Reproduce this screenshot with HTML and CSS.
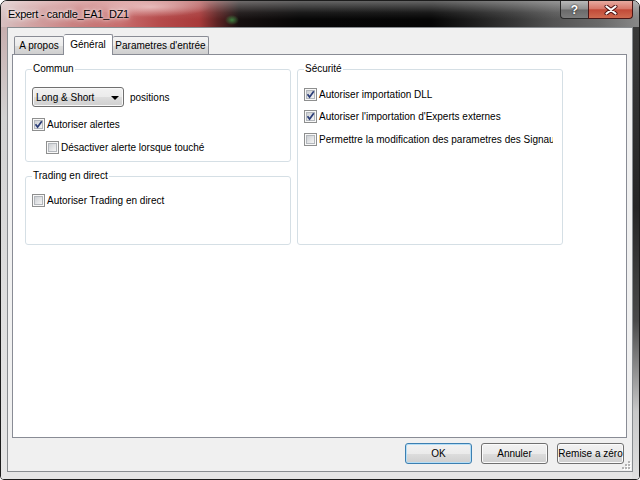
FILE: index.html
```html
<!DOCTYPE html>
<html lang="fr">
<head>
<meta charset="utf-8">
<title>Expert - candle_EA1_DZ1</title>
<link rel="stylesheet" href="styles.css">
</head>
<body>
<div class="window">
  <div class="titlebar">
    <span class="title">Expert - candle_EA1_DZ1</span>
    <div class="caption">
      <span class="cbtn help">?</span>
      <span class="cbtn close">
        <svg width="14" height="10" viewBox="0 0 14 10"><path d="M2.5 1.5 L11.5 8.5 M11.5 1.5 L2.5 8.5" stroke="#4a1010" stroke-width="4" stroke-linecap="round"/><path d="M2.5 1.5 L11.5 8.5 M11.5 1.5 L2.5 8.5" stroke="#fff" stroke-width="2.2" stroke-linecap="round"/></svg>
      </span>
    </div>
  </div>
  <div class="frame">
    <div class="client">
      <div class="tabs">
        <div class="tab w1">A propos</div>
        <div class="tab active w2">Général</div>
        <div class="tab w3">Parametres d'entrée</div>
      </div>
      <div class="panel">
        <div class="col">
          <fieldset class="group commun">
            <legend>Commun</legend>
            <div class="select-row">
              <div class="select"><span>Long &amp; Short</span><span class="arrow"></span></div>
              <span class="after">positions</span>
            </div>
            <div class="check m11"><span class="box"><svg class="tick" width="13" height="13" viewBox="0 0 13 13"><path d="M3.5 6.2 L5.6 9 L9.8 3.2" fill="none" stroke="#2b3d78" stroke-width="1.7"/></svg></span><span class="lbl">Autoriser alertes</span></div>
            <div class="check m10 indent"><span class="box"></span><span class="lbl">Désactiver alerte lorsque touché</span></div>
          </fieldset>
          <fieldset class="group trading">
            <legend>Trading en direct</legend>
            <div class="check m12"><span class="box"></span><span class="lbl">Autoriser Trading en direct</span></div>
          </fieldset>
        </div>
        <fieldset class="group securite">
          <legend>Sécurité</legend>
          <div class="check m13"><span class="box"><svg class="tick" width="13" height="13" viewBox="0 0 13 13"><path d="M3.5 6.2 L5.6 9 L9.8 3.2" fill="none" stroke="#2b3d78" stroke-width="1.7"/></svg></span><span class="lbl">Autoriser importation DLL</span></div>
          <div class="check m9"><span class="box"><svg class="tick" width="13" height="13" viewBox="0 0 13 13"><path d="M3.5 6.2 L5.6 9 L9.8 3.2" fill="none" stroke="#2b3d78" stroke-width="1.7"/></svg></span><span class="lbl">Autoriser l'importation d'Experts externes</span></div>
          <div class="check m10"><span class="box"></span><span class="lbl">Permettre la modification des parametres des Signaux</span></div>
        </fieldset>
      </div>
      <div class="buttons">
        <span class="btn default">OK</span>
        <span class="btn">Annuler</span>
        <span class="btn">Remise a zéro</span>
      </div>
      <svg class="grip" width="9" height="9" viewBox="0 0 9 9"><g fill="#fff"><rect x="7" y="1" width="2" height="2"/><rect x="4" y="4" width="2" height="2"/><rect x="7" y="4" width="2" height="2"/><rect x="1" y="7" width="2" height="2"/><rect x="4" y="7" width="2" height="2"/><rect x="7" y="7" width="2" height="2"/></g><g fill="#b4b4b4"><rect x="6" y="0" width="2" height="2"/><rect x="3" y="3" width="2" height="2"/><rect x="6" y="3" width="2" height="2"/><rect x="0" y="6" width="2" height="2"/><rect x="3" y="6" width="2" height="2"/><rect x="6" y="6" width="2" height="2"/></g></svg>
    </div>
  </div>
</div>
</body>
</html>
```

FILE: styles.css
```css
html, body {
  margin: 0;
  padding: 0;
  width: 640px;
  height: 480px;
  overflow: hidden;
  background: #ffffff;
}

body {
  font-family: "Liberation Sans", Arial, sans-serif;
  font-size: 10px;
  color: #000;
}

.window {
  box-sizing: border-box;
  width: 640px;
  height: 480px;
  border: 1px solid #1c1c1c;
  border-radius: 7px 7px 4px 4px;
  overflow: hidden;
  display: flex;
  flex-direction: column;
  background: #e3e3e3;
}

.titlebar {
  flex: none;
  height: 26px;
  display: flex;
  align-items: flex-start;
  padding: 0 6px 0 7px;
  background:
    linear-gradient(to bottom, rgba(255,255,255,0.38), rgba(255,255,255,0.08) 45%, rgba(255,255,255,0) 70%),
    radial-gradient(ellipse 7px 5px at 231px 19px, #3f7f3f, rgba(63,127,63,0)),
    radial-gradient(ellipse 60px 10px at 150px 6px, rgba(255,235,235,0.55), rgba(255,235,235,0)),
    linear-gradient(to right, #d7c0c0 0, #d2a3a3 30px, #c87a7a 80px, #c86c6c 120px, #b54a4a 160px, #a83a3a 198px, #5e2424 216px, #161010 238px, #070707 300px, #060606 430px, #1f1f1f 475px, #383838 515px, #535353 552px, #6a6a6a 600px, #8a8a8a 640px);
}

.title {
  flex: 1;
  line-height: 26px;
  font-size: 11px;
  letter-spacing: -0.3px;
  color: #000;
  text-shadow: 0 0 3px #fff, 0 0 6px rgba(255,255,255,0.9), 0 0 10px rgba(255,255,255,0.7);
}

.caption {
  display: flex;
  align-items: flex-start;
}

.cbtn {
  box-sizing: border-box;
  height: 18px;
  display: flex;
  align-items: center;
  justify-content: center;
  border: 1px solid #2a2a2a;
  border-top: none;
}

.help {
  width: 28px;
  border-right: none;
  border-radius: 0 0 0 4px;
  background: linear-gradient(to bottom, #b9b9b9, #8e8e8e 48%, #6a6a6a 52%, #7c7c7c);
  color: #fff;
  font-weight: bold;
  font-size: 12px;
  text-shadow: 0 0 2px #000;
}

.close {
  width: 45px;
  border-radius: 0 0 4px 0;
  border-color: #4b1616;
  background: linear-gradient(to bottom, #e7aaa0, #d7796b 45%, #c24a38 52%, #cf6a50);
}

.frame {
  flex: 1;
  display: flex;
  padding: 0 6px 7px 6px;
  background:
    linear-gradient(to bottom, #3a3a3a, #262626 40%, #4a4a4a 65%, #c8c8c8 85%, #e0e0e0) right top / 7px 100% no-repeat,
    linear-gradient(to bottom, #c7aeae, #d2d2d2 20%, #dedede 60%, #e6e6e6) left top / 7px 100% no-repeat,
    #e5e5e5;
}

.client {
  flex: 1;
  position: relative;
  display: flex;
  flex-direction: column;
  background: #f0f0f0;
  border: 1px solid #888c90;
  padding: 6px 5px 7px 4px;
}

.tabs {
  display: flex;
  align-items: flex-end;
  height: 20px;
  padding-left: 2px;
}

.tab {
  box-sizing: border-box;
  height: 18px;
  display: flex;
  align-items: center;
  justify-content: center;
  white-space: nowrap;
  border: 1px solid #898c95;
  border-bottom: none;
  border-radius: 2px 2px 0 0;
  background: linear-gradient(to bottom, #f3f3f3, #ebebeb 50%, #dddddd 51%, #cfcfcf);
}

.tab + .tab {
  border-left: none;
}

.tab.active {
  height: 21px;
  margin-bottom: -1px;
  position: relative;
  z-index: 1;
  background: #ffffff;
  padding-bottom: 1px;
}

.w1 { width: 50px; }
.w2 { width: 49px; }
.w3 { width: 96px; }

.panel {
  flex: 1;
  background: #ffffff;
  border: 1px solid #898c95;
  padding: 8px 12px;
  display: grid;
  grid-template-columns: 266px 266px;
  column-gap: 6px;
  align-items: start;
  align-content: start;
}

.col {
  display: flex;
  flex-direction: column;
}

.group {
  margin: 0;
  min-width: 0;
  border: 1px solid #d5dfe5;
  border-radius: 3px;
  padding: 0 9px 7px 6px;
}

.group legend {
  padding: 0 1px;
  line-height: 12px;
  font-size: 10px;
}

.trading {
  margin-top: 8px;
  padding-bottom: 37px;
}

.securite {
  padding-bottom: 98px;
}

.select-row {
  display: flex;
  align-items: center;
  margin-top: 12px;
}

.select {
  box-sizing: border-box;
  width: 92px;
  height: 20px;
  display: flex;
  align-items: center;
  justify-content: space-between;
  padding: 0 4px 0 3px;
  border: 1px solid #707070;
  border-radius: 3px;
  background: linear-gradient(to bottom, #f2f2f2, #ebebeb 50%, #dddddd 51%, #cfcfcf);
  box-shadow: inset 0 0 0 1px #f8f8f8;
}

.arrow {
  width: 0;
  height: 0;
  border-left: 4px solid transparent;
  border-right: 4px solid transparent;
  border-top: 4px solid #000;
  margin-top: 1px;
}

.after {
  margin-left: 6px;
}

.check {
  display: flex;
  align-items: center;
  height: 13px;
  white-space: nowrap;
  overflow: hidden;
}

.m9 { margin-top: 9px; }
.m10 { margin-top: 10px; }
.m11 { margin-top: 11px; }
.m12 { margin-top: 12px; }
.m13 { margin-top: 13px; }

.indent {
  padding-left: 14px;
}

.box {
  flex: none;
  position: relative;
  box-sizing: border-box;
  width: 13px;
  height: 13px;
  margin-right: 2px;
  border: 1px solid #8e8f8f;
  background:
    linear-gradient(135deg, #cdd0d4, #f4f4f4) 2px 2px / 7px 7px no-repeat,
    linear-gradient(#b3b7bc, #b3b7bc) 1px 1px / 9px 9px no-repeat,
    #f8f8f8;
}

.tick {
  position: absolute;
  left: -1px;
  top: -1px;
}

.lbl {
  line-height: 13px;
}

.buttons {
  display: flex;
  justify-content: flex-end;
  gap: 9px;
  margin-top: 5px;
  padding-right: 3px;
}

.btn {
  box-sizing: border-box;
  width: 67px;
  height: 21px;
  display: flex;
  align-items: center;
  justify-content: center;
  white-space: nowrap;
  border: 1px solid #707070;
  border-radius: 3px;
  background: linear-gradient(to bottom, #f2f2f2, #ebebeb 50%, #dddddd 51%, #cfcfcf);
  box-shadow: inset 0 0 0 1px #fbfbfb;
}

.btn.default {
  border-color: #3c7fb1;
  box-shadow: inset 0 0 0 1px #b5def6;
}

.grip {
  position: absolute;
  right: 1px;
  bottom: 1px;
}
```
